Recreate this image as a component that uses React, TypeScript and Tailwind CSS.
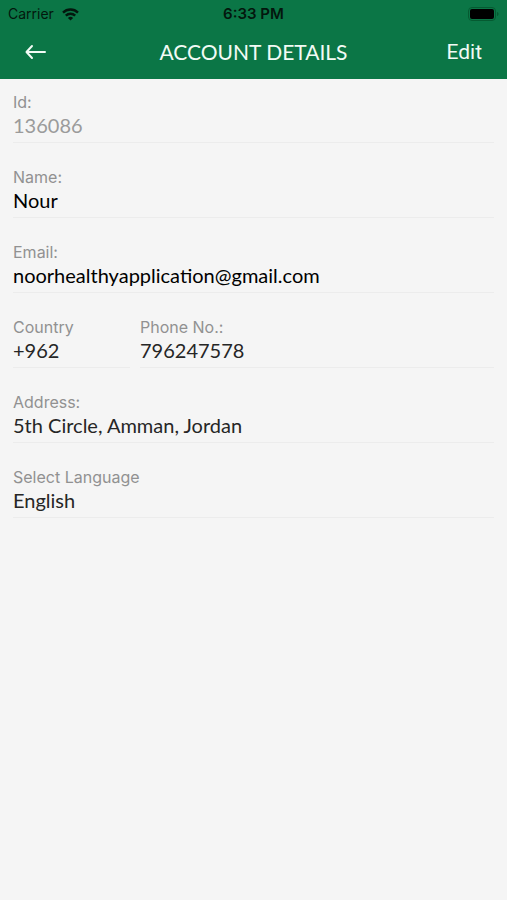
import type { InputHTMLAttributes } from "react";

const labelClass =
  "block font-['Inter',sans-serif] text-[16px] leading-5 text-[#919191]";
const valueClass =
  "block w-full appearance-none rounded-none border-b border-[#ececec] bg-transparent p-0 pb-1 h-[31px] text-[20px] leading-[26px] outline-none";

type FieldProps = InputHTMLAttributes<HTMLInputElement> & {
  id: string;
  label: string;
  tone?: string;
};

function Field({ id, label, tone = "text-[#262626]", ...rest }: FieldProps) {
  return (
    <div className="min-w-0">
      <label htmlFor={id} className={labelClass}>
        {label}
      </label>
      <input id={id} className={`${valueClass} ${tone}`} {...rest} />
    </div>
  );
}

function StatusBar() {
  return (
    <div className="grid h-7 grid-cols-[1fr_auto_1fr] items-center px-2 font-['Inter',sans-serif] text-[14px] leading-5 text-[#03170d]">
      <div className="flex items-center gap-2">
        <span>Carrier</span>
        <svg width="17" height="13" viewBox="0 0 17 13" fill="none" stroke="currentColor" strokeWidth="2.4" aria-hidden="true">
          <path d="M1 4.6a10.8 10.8 0 0 1 15 0" />
          <path d="M3.8 7.6a6.8 6.8 0 0 1 9.4 0" />
          <path d="M8.500 12.500 5.900 9.900a3.800 3.800 0 0 1 5.200 0Z" fill="currentColor" stroke="none" />
        </svg>
      </div>
      <span className="text-center text-[15px] font-semibold">6:33 PM</span>
      <svg className="justify-self-end" width="31" height="14" viewBox="0 0 31 14" aria-hidden="true">
        <rect x="0.5" y="0.5" width="27" height="13" rx="3.5" fill="none" stroke="#055a31" />
        <rect x="2" y="2" width="24" height="10" rx="2" fill="#000" />
        <path d="M29 5c2 .6 2 3.4 0 4Z" fill="#055a31" />
      </svg>
    </div>
  );
}

export default function App() {
  return (
    <div className="min-h-screen bg-[#f5f5f5] font-['Lato',sans-serif]">
      <header className="bg-[#0b7646] pb-[3px]">
        <StatusBar />
        <div className="grid h-12 grid-cols-[1fr_auto_1fr] items-center px-[25px] text-[#f2fbf5]">
          <button type="button" aria-label="Back" className="justify-self-start">
            <svg width="22" height="16" viewBox="0 0 22 16" fill="none" stroke="currentColor" strokeWidth="2" strokeLinecap="round" strokeLinejoin="round" aria-hidden="true">
              <path d="M20 8H2M7 2 1.500 8 7 14" />
            </svg>
          </button>
          <h1 className="text-[21px] leading-7">ACCOUNT DETAILS</h1>
          <button type="button" className="justify-self-end font-['Roboto',sans-serif] text-[21px] leading-7">
            Edit
          </button>
        </div>
      </header>
      <main className="flex flex-col gap-6 px-[13px] pt-[13px]">
        <Field id="account-id" label="Id:" defaultValue="136086" disabled tone="text-[#9b9b9b]" />
        <Field id="name" label="Name:" defaultValue="Nour" readOnly tone="text-black" />
        <Field id="email" label="Email:" type="email" defaultValue="noorhealthyapplication@gmail.com" readOnly tone="text-black" />
        <div className="grid grid-cols-[117px_1fr] gap-[10px]">
          <Field id="country" label="Country" defaultValue="+962" readOnly />
          <Field id="phone" label="Phone No.:" type="tel" defaultValue="796247578" readOnly />
        </div>
        <Field id="address" label="Address:" defaultValue="5th Circle, Amman, Jordan" readOnly />
        <div>
          <label htmlFor="language" className={labelClass}>
            Select Language
          </label>
          <select id="language" className={`${valueClass} text-[#262626]`} defaultValue="English">
            <option>English</option>
          </select>
        </div>
      </main>
    </div>
  );
}
